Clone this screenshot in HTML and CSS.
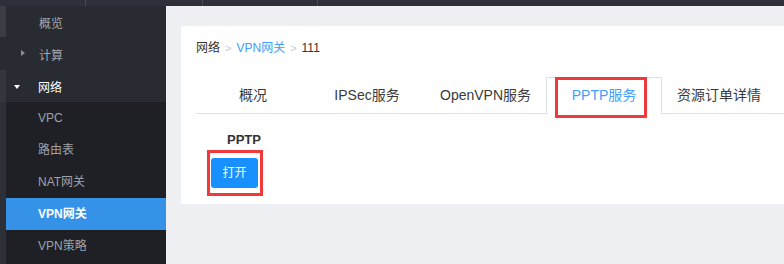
FILE: index.html
```html
<!DOCTYPE html>
<html lang="zh-CN">
<head>
<meta charset="utf-8">
<title>VPN网关 - PPTP服务</title>
<link rel="stylesheet" href="styles.css">
</head>
<body>
<div class="topbar">
  <span class="tb-seg tb-a"></span>
  <span class="tb-seg tb-b"></span>
  <span class="tb-seg tb-c"></span>
</div>
<div class="layout">
  <div class="rail">
    <div class="rail-a"></div>
    <div class="rail-b"></div>
    <div class="rail-c"></div>
  </div>
  <nav class="sidebar">
    <div class="menu-item">概览</div>
    <div class="menu-item collapsed"><span class="caret caret-right"></span>计算</div>
    <div class="menu-item open"><span class="caret caret-down"></span>网络</div>
    <div class="submenu">
      <div class="sub-item">VPC</div>
      <div class="sub-item">路由表</div>
      <div class="sub-item">NAT网关</div>
      <div class="sub-item active">VPN网关</div>
      <div class="sub-item">VPN策略</div>
    </div>
  </nav>
  <main class="main">
    <section class="card">
      <div class="breadcrumb">
        <span class="bc-text">网络</span>
        <span class="bc-sep">&gt;</span>
        <span class="bc-link">VPN网关</span>
        <span class="bc-sep">&gt;</span>
        <span class="bc-text">111</span>
      </div>
      <div class="tabs">
        <div class="tab">概况</div>
        <div class="tab">IPSec服务</div>
        <div class="tab">OpenVPN服务</div>
        <div class="tab active">PPTP服务<span class="mark mark-tab"></span></div>
        <div class="tab">资源订单详情</div>
      </div>
      <div class="form">
        <div class="form-label">PPTP</div>
        <div class="btn-wrap">
          <button class="btn-primary" type="button">打开</button>
          <span class="mark mark-btn"></span>
        </div>
      </div>
    </section>
  </main>
</div>
</body>
</html>
```
FILE: styles.css
```css
* {
  box-sizing: border-box;
}

html, body {
  margin: 0;
  padding: 0;
}

body {
  width: 784px;
  height: 264px;
  overflow: hidden;
  font-family: "Liberation Sans", "Noto Sans CJK SC", sans-serif;
  font-size: 12px;
  color: #333;
  background: #eff0f4;
}

/* top bar */
.topbar {
  height: 6px;
  background: #2e3039;
  display: flex;
}

.tb-seg {
  height: 6px;
  border-right: 1px solid #464951;
}

.tb-a { width: 86px; }
.tb-b { width: 117px; }
.tb-c { width: 115px; }

/* layout */
.layout {
  display: flex;
  height: 258px;
}

.rail {
  width: 6px;
  display: flex;
  flex-direction: column;
  background: #2e3038;
}

.rail-a {
  height: 31px;
  background: #3a3d44;
}

.rail-b {
  height: 33px;
  background: #282b31;
}

.rail-c {
  height: 32px;
  background: #33363c;
}

/* sidebar */
.sidebar {
  width: 160px;
  background: #282b31;
  padding-top: 2px;
  display: flex;
  flex-direction: column;
}

.menu-item {
  height: 32px;
  line-height: 32px;
  padding-left: 33px;
  color: #a3a6ad;
  font-size: 12px;
  display: flex;
  align-items: center;
}

.menu-item.collapsed {
  padding-left: 15px;
}

.menu-item.open {
  height: 30px;
  line-height: 28px;
  padding-top: 2px;
  padding-left: 8px;
  color: #fff;
}

.caret {
  width: 0;
  height: 0;
  display: block;
}

.caret-right {
  border-left: 4px solid #8c8f96;
  border-top: 3px solid transparent;
  border-bottom: 3px solid transparent;
  margin-right: 14px;
  margin-bottom: 6px;
}

.caret-down {
  border-top: 4px solid #fff;
  border-left: 3.5px solid transparent;
  border-right: 3.5px solid transparent;
  margin-right: 18px;
  margin-bottom: 3px;
}

.submenu {
  flex: 1;
  background: #1f2026;
}

.sub-item {
  height: 32px;
  line-height: 32px;
  padding-left: 32px;
  color: #9ea1a8;
  font-size: 12px;
}

.sub-item.active {
  background: #3592e6;
  color: #fff;
  font-weight: bold;
}

/* main */
.main {
  flex: 1;
  padding: 20px 0 0 15px;
  overflow: hidden;
  display: flex;
  align-items: flex-start;
}

.card {
  flex: none;
  width: 640px;
  background: #fff;
  padding: 14px 0 16px 15px;
}

.breadcrumb {
  height: 16px;
  line-height: 16px;
  font-size: 12px;
  display: flex;
  align-items: center;
}

.bc-text {
  color: #333;
}

.bc-link {
  color: #409eff;
}

.bc-sep {
  color: #c6c9cf;
  font-size: 11px;
  margin: 0 5px;
}

/* tabs */
.tabs {
  margin-top: 21px;
  display: flex;
  border-bottom: 1px solid #dfe2e8;
  height: 37px;
}

.tab {
  position: relative;
  box-sizing: content-box;
  height: 35px;
  line-height: 35px;
  min-width: 82px;
  padding: 0 15px;
  text-align: center;
  font-size: 14px;
  color: #3a3a3a;
  border: 1px solid transparent;
  border-bottom: 0;
  white-space: nowrap;
}

.tab.active {
  height: 36px;
  margin: 0 -1px -1px;
  padding: 0 16px;
  border-color: #dcdfe6;
  background: #fff;
  color: #409eff;
}

/* red annotation boxes */
.mark {
  position: absolute;
  border: 3px solid #f0393a;
  pointer-events: none;
}

.mark-tab {
  left: 8px;
  top: -1px;
  width: 92px;
  height: 41px;
}

.mark-btn {
  left: -4px;
  top: -8px;
  width: 56px;
  height: 46px;
}

/* form */
.form {
  display: flex;
  flex-direction: column;
  align-items: flex-start;
}

.form-label {
  margin-top: 17px;
  margin-left: 31px;
  height: 18px;
  line-height: 18px;
  font-size: 13px;
  font-weight: bold;
  color: #333;
}

.btn-wrap {
  position: relative;
  margin-top: 9px;
  margin-left: 15px;
  display: flex;
}

.btn-primary {
  width: 47px;
  height: 30px;
  padding: 0;
  border: 0;
  border-radius: 3px;
  background: #1890ff;
  color: #fff;
  font-family: "Liberation Sans", "Noto Sans CJK SC", sans-serif;
  font-size: 12px;
  line-height: 30px;
}
```
